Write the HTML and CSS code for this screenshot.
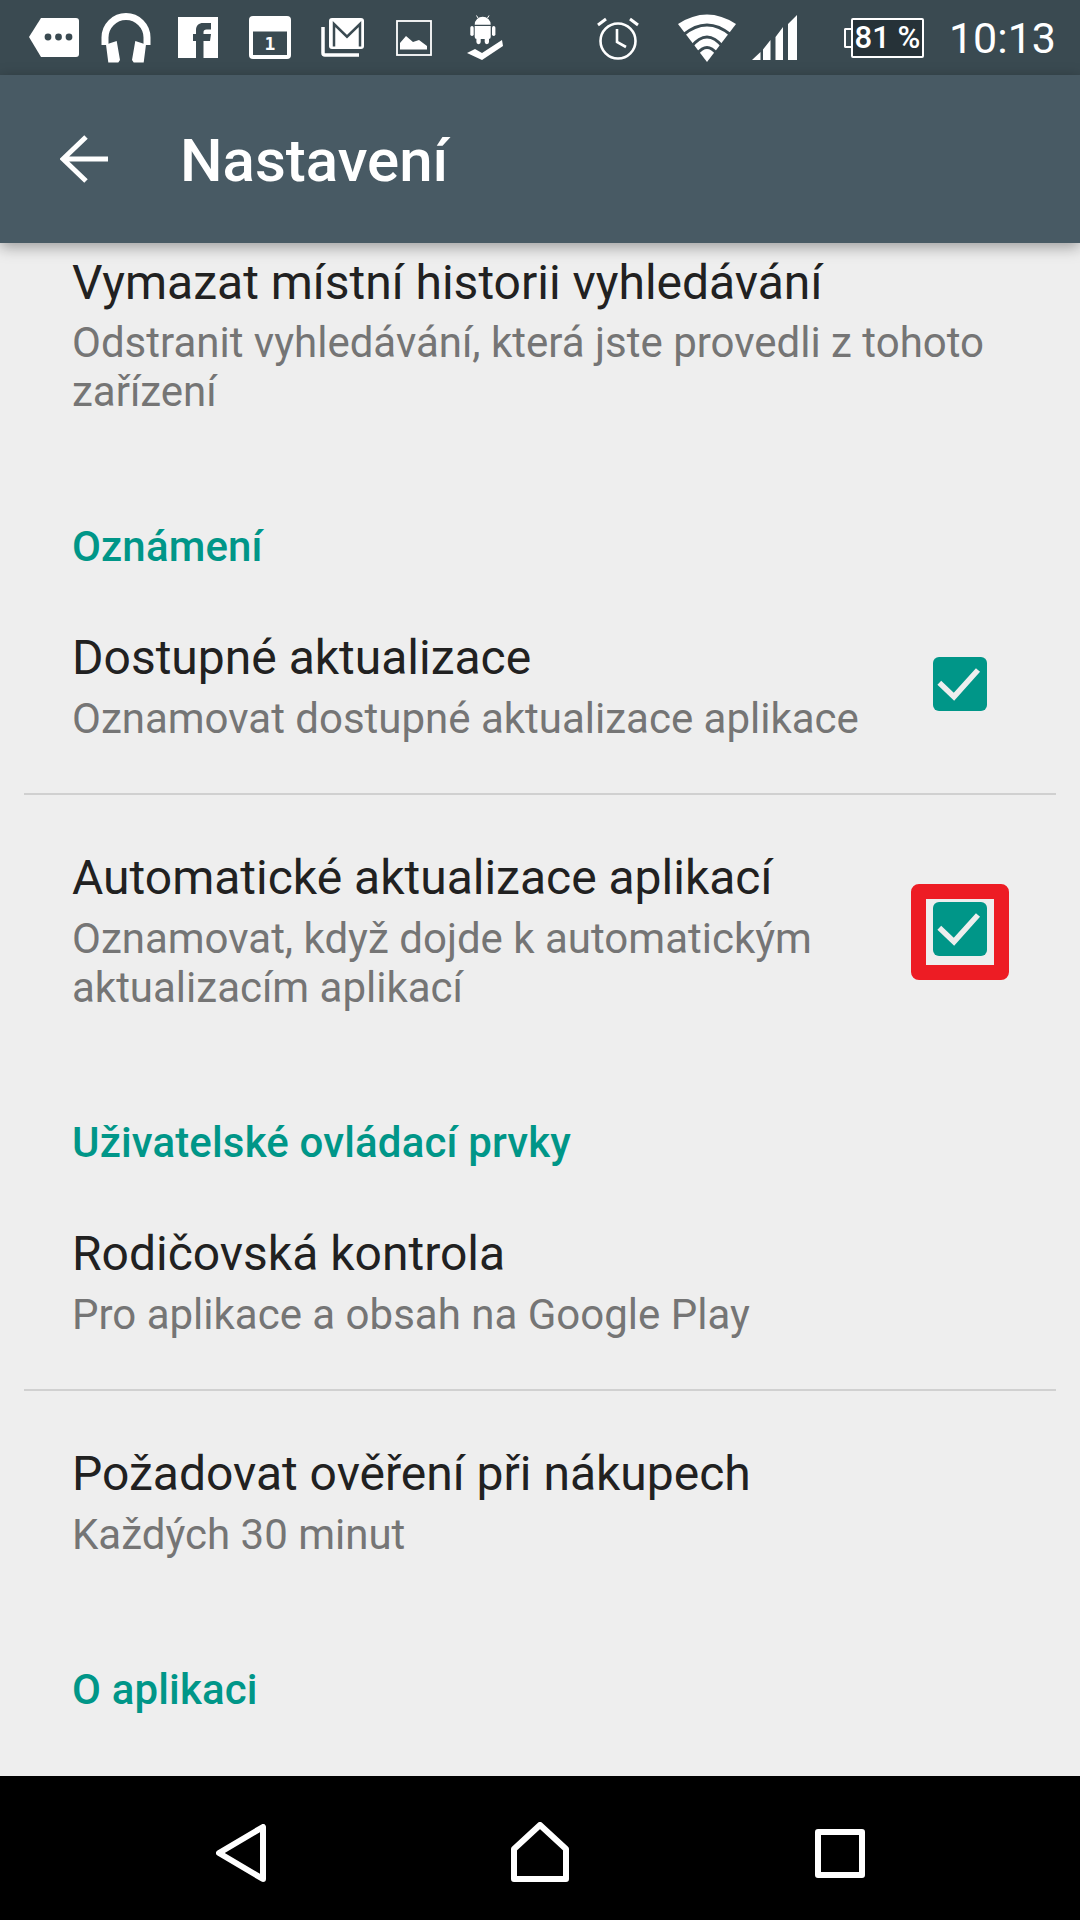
FILE: index.html
```html
<!DOCTYPE html>
<html lang="cs">
<head>
<meta charset="utf-8">
<title>Nastavení</title>
<link rel="stylesheet" href="styles.css">
</head>
<body>
<div class="screen">
  <header class="statusbar">
    <div class="notif">
      <div class="slot"><svg width="50" height="39" viewBox="0 0 50 39"><path class="w" d="M12 0H47a3 3 0 0 1 3 3V36a3 3 0 0 1-3 3H12L0 19Z"/><circle class="d" cx="19" cy="19" r="3.4"/><circle class="d" cx="29.5" cy="19" r="3.4"/><circle class="d" cx="40" cy="19" r="3.4"/></svg></div>
      <div class="slot"><svg width="50" height="50" viewBox="0 0 50 50"><path class="ws" d="M4 32V24.500a21 21 0 0 1 42 0V32" stroke-width="7"/><path class="w" d="M5 31.500L15.700 28 19 47 17.300 49.500H7.300ZM45 31.500L34.300 28 31 47 32.700 49.500H42.700Z"/></svg></div>
      <div class="slot"><svg width="40" height="41" viewBox="0 0 40 41"><rect class="w" width="40" height="41"/><path class="d" d="M18 41V24H15V17H18V13C18 8.500 21 6 25 6H33V12.500H28.500C26.500 12.500 25.500 13.500 25.500 15V17H33L32 24H25.500V41Z"/></svg></div>
      <div class="slot"><svg width="42" height="43" viewBox="0 0 42 43"><rect class="w" width="42" height="43" rx="4"/><rect class="d" x="4" y="15.500" width="34" height="23.500"/><text class="cal" x="21" y="34" text-anchor="middle">1</text></svg></div>
      <div class="slot"><svg width="43" height="39" viewBox="0 0 43 39"><path class="ws" d="M2 9V35Q2 37 4 37H38" stroke-width="3.500"/><rect class="w" x="8" y="0" width="35" height="31" rx="3"/><path class="ds" d="M13 28.500V6L26 18.700 39 6V28.500" stroke-width="2.500"/></svg></div>
      <div class="slot"><svg width="36" height="36" viewBox="0 0 36 36"><rect class="ws" x="1" y="1" width="34" height="34" stroke-width="1.800"/><path class="w" d="M4 29.500V23L10 16 17 22 23 20 31 26V29.500Z"/></svg></div>
      <div class="slot"><svg width="38" height="46" viewBox="0 0 38 46"><path class="ws" d="M11 3L9.500 0.500M20.500 3L22 0.500" stroke-width="1"/><path class="w" d="M7.700 9.700a8 8 0 0 1 16 0ZM7.700 11H23.700V22Q23.700 24 21.700 24H22V27a2.150 2.150 0 0 1-4.300 0V24H13.700V27a2.150 2.150 0 0 1-4.300 0V24H9.700Q7.700 24 7.700 22Z"/><rect class="w" x="3.300" y="11" width="3.400" height="10" rx="1.700"/><rect class="w" x="25" y="11" width="3.400" height="10" rx="1.700"/><path class="w" d="M0 38L8 34 15 38 35 25 36 31 15 45Z"/></svg></div>
    </div>
    <div class="system">
      <svg class="alarm" width="44" height="44" viewBox="0 0 44 44"><circle class="ws" cx="22" cy="25" r="17.500" stroke-width="2.600"/><path class="ws" d="M21 13V26L30 31" stroke-width="2.600"/><path class="ws" d="M2 9L10 3M42 9L34 3" stroke-width="3"/></svg>
      <svg class="wifi" width="58" height="48" viewBox="0 0 58 48"><path class="w" d="M0 10Q29-9 58 10L29 48Z"/><path class="ds" d="M5 21Q29 1 53 21" stroke-width="3"/><path class="ds" d="M13 33Q29 13 45 33" stroke-width="3"/><path class="ds" d="M19 40Q29 27 39 40" stroke-width="3"/></svg>
      <svg class="signal" width="45" height="46" viewBox="0 0 45 46"><path class="w" d="M0 45L8.500 37V45ZM11 34.500L18.500 25V45H11ZM23.500 22L31 12V45H23.500ZM36 9L45 0V45H36Z"/></svg>
      <div class="battery"><span class="batt-nub"></span><span class="batt-body">81 %</span></div>
      <span class="clock">10:13</span>
    </div>
  </header>

  <div class="toolbar">
    <svg class="back" width="48" height="48" viewBox="0 0 48 48"><path class="ws" d="M48 24H3M26 2L3 24 26 46" stroke-width="5"/></svg>
    <h1 class="toolbar-title">Nastavení</h1>
  </div>

  <main class="content">
    <div class="row row-first">
      <div class="row-text">
        <div class="row-title">Vymazat místní historii vyhledávání</div>
        <div class="row-sub">Odstranit vyhledávání, která jste provedli z tohoto zařízení</div>
      </div>
    </div>

    <h2 class="section">Oznámení</h2>
    <div class="row row-top">
      <div class="row-text">
        <div class="row-title">Dostupné aktualizace</div>
        <div class="row-sub">Oznamovat dostupné aktualizace aplikace</div>
      </div>
      <div class="check"><svg width="54" height="54" viewBox="0 0 54 54"><path class="tick" d="M6.300 25.700L21 39.700 45 13"/></svg></div>
    </div>
    <hr class="divider">
    <div class="row">
      <div class="row-text">
        <div class="row-title">Automatické aktualizace aplikací</div>
        <div class="row-sub">Oznamovat, když dojde k automatickým aktualizacím aplikací</div>
      </div>
      <div class="check"><svg width="54" height="54" viewBox="0 0 54 54"><path class="tick" d="M6.300 25.700L21 39.700 45 13"/></svg><span class="highlight"></span></div>
    </div>

    <h2 class="section">Uživatelské ovládací prvky</h2>
    <div class="row row-top">
      <div class="row-text">
        <div class="row-title">Rodičovská kontrola</div>
        <div class="row-sub">Pro aplikace a obsah na Google Play</div>
      </div>
    </div>
    <hr class="divider">
    <div class="row">
      <div class="row-text">
        <div class="row-title">Požadovat ověření při nákupech</div>
        <div class="row-sub">Každých 30 minut</div>
      </div>
    </div>

    <h2 class="section">O aplikaci</h2>
  </main>

  <nav class="navbar">
    <svg width="50" height="58" viewBox="0 0 50 58"><path class="nav-s" d="M47 3V55L3 29Z"/></svg>
    <svg class="nav-home" width="58" height="60" viewBox="0 0 58 60"><path class="nav-s" d="M3 57V27L29 3 55 27V57Z"/></svg>
    <svg class="nav-recent" width="50" height="49" viewBox="0 0 50 49"><rect class="nav-s" x="3" y="3" width="44" height="43"/></svg>
  </nav>
</div>
</body>
</html>
```

FILE: styles.css
```css
* { box-sizing: border-box; }
html, body { margin: 0; padding: 0; }
body { font-family: Roboto, "Noto Sans", sans-serif; background: #eee; }
.screen { width: 1080px; height: 1920px; display: flex; flex-direction: column; overflow: hidden; background: #eee; }

svg { display: block; flex: none; }
.w { fill: #fff; }
.d { fill: #3a4a51; }
.ws { fill: none; stroke: #fff; }
.ds { fill: none; stroke: #3a4a51; }
.cal { fill: #fff; font-family: "DejaVu Sans Mono", monospace; font-weight: 700; font-size: 18px; }

.statusbar { height: 75px; flex: none; background: #3a4a51; display: flex; justify-content: space-between; align-items: center; padding: 0 24px 0 18px; color: #fff; }
.notif { display: flex; align-items: center; }
.slot { width: 72px; display: flex; justify-content: center; }
.system { display: flex; align-items: center; }
.alarm { margin-right: 38px; }
.wifi { margin-right: 16px; }
.signal { margin-right: 47px; }
.battery { display: flex; align-items: center; margin-right: 25px; }
.batt-nub { width: 7px; height: 20px; border: 2px solid #fff; border-right: 0; border-radius: 2px 0 0 2px; }
.batt-body { width: 73px; height: 40px; border: 2px solid #fff; border-radius: 2px; background: #263238; font-size: 31px; font-weight: 500; line-height: 36px; text-align: center; }
.clock { font-size: 43px; line-height: 50px; }

.toolbar { height: 168px; flex: none; background: #485a64; display: flex; align-items: center; padding-left: 60px; position: relative; z-index: 1; box-shadow: 0 4px 14px rgba(0,0,0,.35); color: #fff; }
.back { margin-right: 72px; }
.toolbar-title { margin: 0; padding-top: 4px; font-size: 60px; font-weight: 500; line-height: 70px; }

.content { flex: 1; min-height: 0; overflow: hidden; padding: 9px 24px 0; }
.row { display: flex; align-items: center; padding: 52px 48px 51px; }
.row-top { padding-bottom: 50px; }
.row-first { padding-top: 0; }
.row-text { flex: 1; min-width: 0; }
.row-title { font-size: 48px; line-height: 62px; color: #212121; }
.row-sub { font-size: 42px; line-height: 49px; margin-top: 5px; color: #757575; }
.row-first .row-sub { margin-top: 4px; }
.section { margin: 52px 0 0; padding: 0 48px; font-size: 42px; font-weight: 500; letter-spacing: .15px; line-height: 56px; color: #009688; }
.divider { margin: 0; border: 0; height: 2px; background: #d0d0d0; }

.check { position: relative; width: 54px; height: 54px; flex: none; border-radius: 6px; background: #009688; margin: -2px 21px 0 0; }
.tick { fill: none; stroke: #eee; stroke-width: 5.5; }
.highlight { position: absolute; left: -22px; top: -18px; width: 98px; height: 96px; border: 15px solid #ed1c24; border-radius: 8px; }

.navbar { height: 144px; flex: none; background: #000; display: flex; align-items: center; padding: 10px 0 0 216px; }
.nav-home { margin: -3px 245px 0; }
.nav-recent { margin-left: 1px; }
.nav-s { fill: none; stroke: #fff; stroke-width: 6; stroke-linejoin: round; }
```
